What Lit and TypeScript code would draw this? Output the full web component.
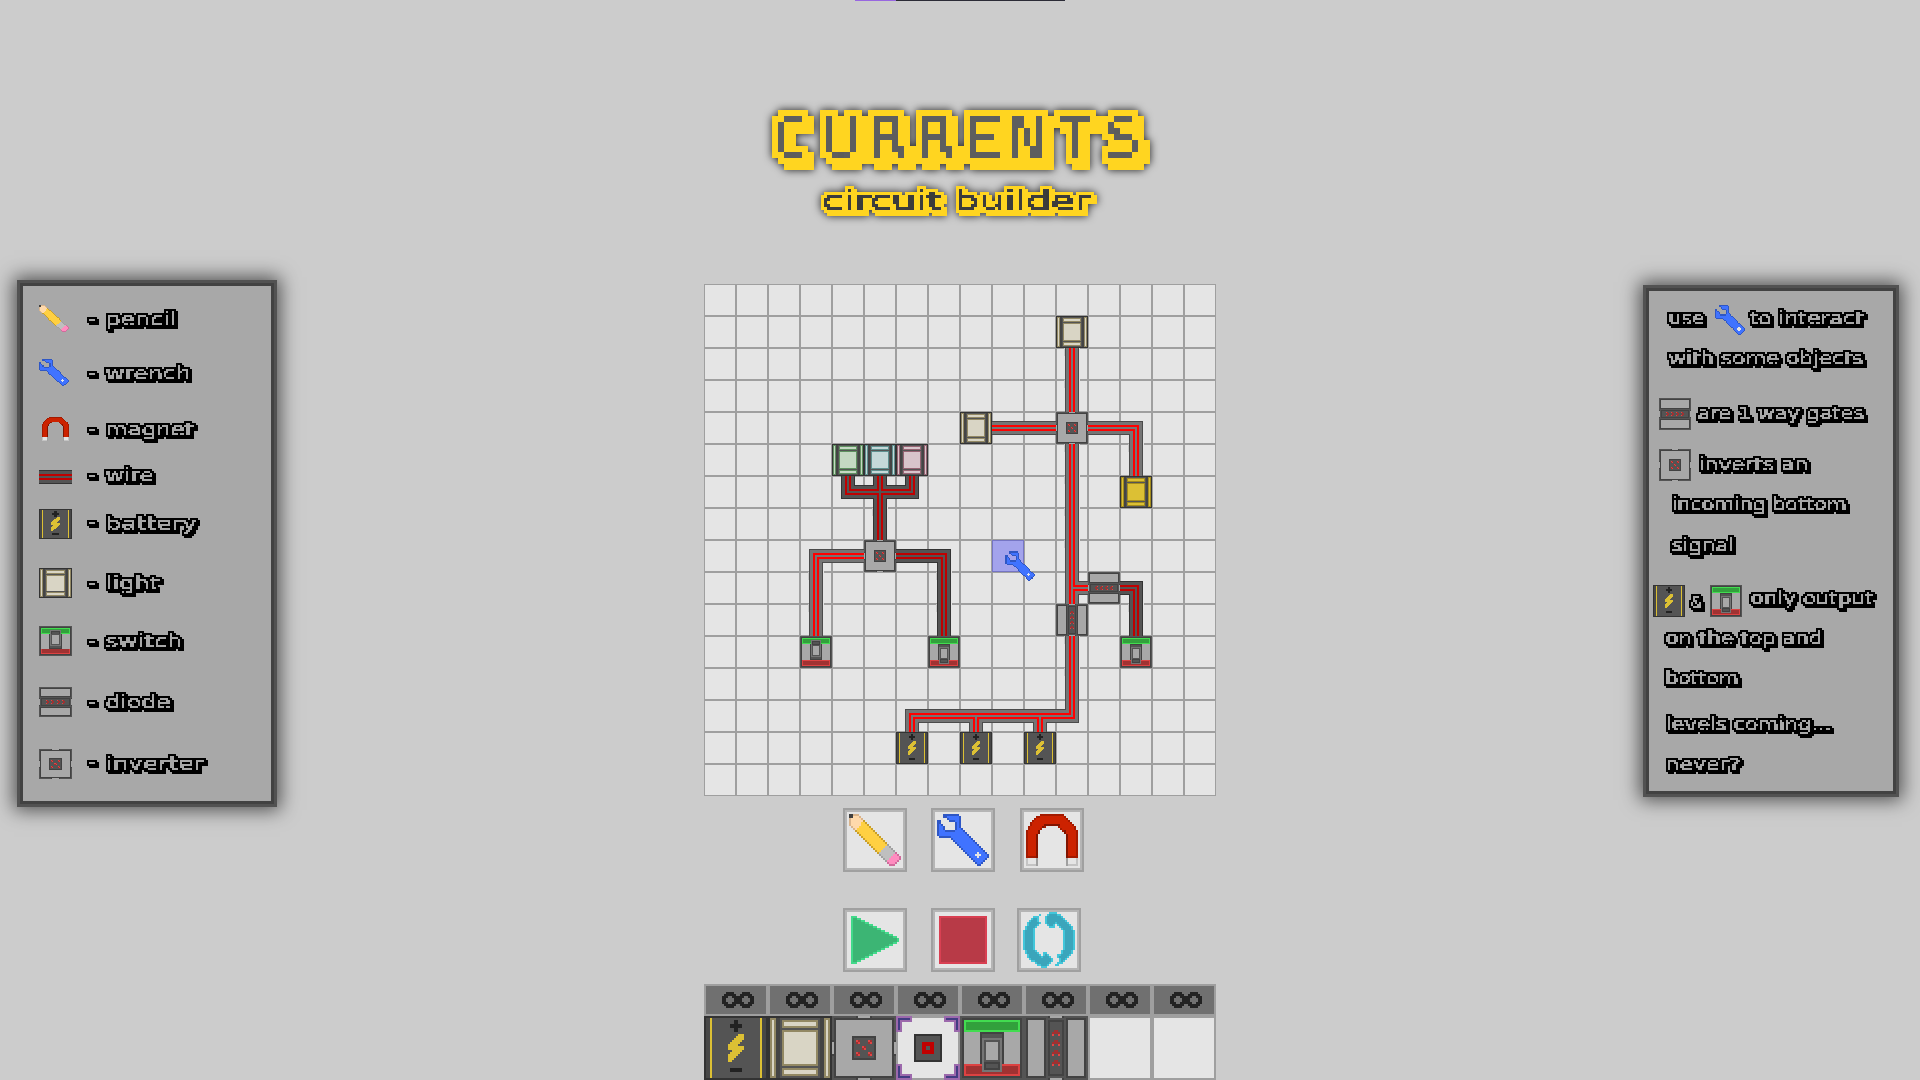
import { LitElement, html, svg, css } from "lit";
import { customElement } from "lit/decorators.js";

type Pt = [number, number];
const r = (x: number, y: number, w: number, h: number, f: string) =>
  svg`<rect x=${x} y=${y} width=${w} height=${h} fill=${f}></rect>`;

/* Pixel-art rasteriser: polygons are sampled on a 32x32 canvas. */
interface Shape { pts: Pt[]; fill: string; edge: string; }
const inside = (p: Pt[], x: number, y: number) => {
  let c = false;
  for (let i = 0, j = p.length - 1; i < p.length; j = i++) {
    const [xi, yi] = p[i], [xj, yj] = p[j];
    if (yi > y !== yj > y && x < ((xj - xi) * (y - yi)) / (yj - yi) + xi) c = !c;
  }
  return c;
};
const P = (s: string): Pt[] => s.trim().split(/\s+/).map((q) => q.split(",").map(Number) as Pt);
const raster = (shapes: Shape[]) => {
  const g: number[][] = [];
  for (let y = 0; y < 32; y++) {
    g.push([]);
    for (let x = 0; x < 32; x++) {
      let k = -1;
      shapes.forEach((s, i) => { if (inside(s.pts, x + 0.5, y + 0.5)) k = i; });
      g[y].push(k);
    }
  }
  const at = (x: number, y: number) => (g[y] && g[y][x] !== undefined ? g[y][x] : -1);
  const d: Record<string, string> = {};
  for (let y = 0; y < 32; y++)
    for (let x = 0; x < 32; x++) {
      const k = g[y][x];
      if (k < 0) continue;
      const e = at(x - 1, y) < 0 || at(x + 1, y) < 0 || at(x, y - 1) < 0 || at(x, y + 1) < 0;
      const c = e ? shapes[k].edge : shapes[k].fill;
      d[c] = (d[c] || "") + `M${x} ${y}h1v1h-1z`;
    }
  return Object.entries(d).map(([c, q]) => svg`<path fill=${c} d=${q}></path>`);
};
const bitmap = (rows: string[], c: string) =>
  svg`<path fill=${c} d=${rows.map((l, y) => [...l].map((q, x) => (q === "#" ? `M${x} ${y}h1v1h-1z` : "")).join("")).join("")}></path>`;

/* Tools */
const pencil = raster([
  { pts: P("3,3 8,3 11,6 11,8 8,11 6,11 3,8"), fill: "#ffd9ab", edge: "#d9b48c" },
  { pts: P("11,6 24,19 19,24 6,11 8,10 9,9 9,8"), fill: "#ffd042", edge: "#c9a02c" },
  { pts: P("23,18 27,22 22,27 18,23"), fill: "#bfbfbf", edge: "#a0a0a0" },
  { pts: P("26,22 27,22 29,24 29,26 26,29 24,29 22,27"), fill: "#ff8cbf", edge: "#d06c9c" },
  { pts: P("3,3 5,3 5,5 3,5"), fill: "#404040", edge: "#404040" },
]);
const wrench = svg`${raster([
  { pts: P("6,3 14,3 15,4 15,9 29,23 29,25 25,29 24,29 9.5,15 5,15 3,13 3,6 5,6 5,8 7,9 7,11 12,11 12,7 10,7 8,5 6,5"), fill: "#4073ff", edge: "#2f57c4" },
])}${r(22, 23, 3, 1, "#e5e5e5")}${r(23, 22, 1, 3, "#e5e5e5")}`;
const arch = P("3,25 3,12 4,10 5,8 7,6 9,4 11,3 21,3 23,4 25,6 27,8 28,10 29,12 29,25 23,25 23,14 22,12 20,10 18,9 14,9 12,10 10,12 9,14 9,25");
const magnet = svg`${raster([{ pts: arch, fill: "#cc2200", edge: "#a31a00" }])}
  ${r(8, 13, 1, 12, "#801400")}${r(9, 11, 1, 2, "#801400")}${r(11, 9, 1, 1, "#801400")}${r(12, 8, 8, 1, "#801400")}${r(23, 13, 1, 12, "#801400")}${r(22, 11, 1, 2, "#801400")}
  ${r(3, 25, 6, 4, "#c4c4c4")}${r(4, 25, 4, 3, "#e5e5e5")}${r(23, 25, 6, 4, "#c4c4c4")}${r(24, 25, 4, 3, "#e5e5e5")}${r(8, 25, 1, 4, "#a0a0a0")}${r(23, 25, 1, 4, "#a0a0a0")}`;
const play = raster([{ pts: P("4,4 6,4 28,15 28,17 6,28 4,28"), fill: "#3cb574", edge: "#42d98a" }]);
const stop = raster([{ pts: P("4,4 28,4 28,28 4,28"), fill: "#b83a47", edge: "#d94052" }]);
const half = P("13,3 9,4 7,6 5,8 3,12 3,20 5,24 8,27 11,29 13,30 15,30 18,27 18,25 15,22 13,22 13,24 11,23 9,20 9,12 10,9 13,8 11,7 11,5");
const reload = raster([half, half.map(([x, y]) => [32 - x, 32 - y] as Pt)].map((pts) => ({ pts, fill: "#3ba5bb", edge: "#42c6da" })));

/* Components */
const battery = svg`${r(0, 0, 32, 32, "#333333")}${r(1, 1, 30, 30, "#474747")}${r(4, 1, 24, 30, "#545454")}
  ${r(3, 1, 1, 30, "#dcc034")}${r(28, 1, 1, 30, "#dcc034")}
  ${r(13, 4, 6, 2, "#222")}${r(15, 2, 2, 6, "#222")}${r(13, 26, 6, 2, "#222")}
  ${raster([{ pts: P("18,9 20,9 20,12 17,15 20,15 20,17 14,23 12,23 12,20 15,17 12,17 12,15"), fill: "#dcc034", edge: "#dcc034" }])}`;
const light = (f: string, e: string) => {
  const b = (x: number, y: number, w: number, h: number) => svg`${r(x, y, w, h, e)}${r(x + 1, y + 1, w - 2, h - 2, f)}`;
  return svg`${r(0, 0, 32, 32, "#333333")}${r(4, 1, 24, 30, "#444")}${r(6, 1, 20, 30, "#545454")}
    ${b(1, 1, 3, 30)}${b(28, 1, 3, 30)}${b(7, 2, 18, 4)}${b(7, 7, 18, 18)}${b(7, 26, 18, 4)}`;
};
const frame = svg`${r(0, 0, 32, 32, "#545454")}${r(1, 1, 30, 30, "#424242")}${r(2, 2, 28, 28, "#a8a8a8")}`;
const dot = (x: number, y: number) => svg`${r(x, y, 2, 2, "#a03030")}${r(x, y, 1, 1, "#e04444")}${r(x + 1, y + 1, 1, 1, "#e04444")}`;
const inverter = svg`${frame}
  ${r(12, 0, 8, 1, "#424242")}${r(12, 31, 8, 1, "#424242")}${r(0, 12, 1, 8, "#424242")}${r(31, 12, 1, 8, "#424242")}
  ${r(13, 0, 6, 1, "#a8a8a8")}${r(13, 31, 6, 1, "#a8a8a8")}${r(0, 13, 1, 6, "#a8a8a8")}${r(31, 13, 1, 6, "#a8a8a8")}
  ${r(10, 10, 12, 12, "#424242")}${r(11, 11, 10, 10, "#545454")}
  ${dot(12, 12)}${dot(18, 12)}${dot(15, 15)}${dot(12, 18)}${dot(18, 18)}`;
const switcher = (up: boolean) => svg`${frame}
  ${r(2, 2, 28, 6, "#42dc50")}${r(3, 3, 26, 4, "#32a03c")}${r(2, 24, 28, 6, "#dc4242")}${r(3, 25, 26, 4, "#a03232")}
  <g transform=${up ? "matrix(1 0 0 -1 0 32)" : ""}>
    ${r(10, 8, 12, 16, "#424242")}${r(11, 9, 10, 3, "#545454")}${r(11, 11, 10, 17, "#757575")}${r(12, 12, 8, 15, "#545454")}
    ${r(13, 13, 6, 9, "#a8a8a8")}${r(12, 23, 8, 4, "#424242")}${r(13, 24, 6, 2, "#545454")}</g>`;
const diode = (deg = 0) => svg`<g transform=${`rotate(${deg} 16 16)`}>
  ${r(0, 0, 32, 32, "#545454")}${r(1, 1, 10, 30, "#424242")}${r(2, 2, 8, 28, "#a8a8a8")}${r(21, 1, 10, 30, "#424242")}${r(22, 2, 8, 28, "#a8a8a8")}
  ${r(12, 0, 8, 1, "#424242")}${r(12, 31, 8, 1, "#424242")}${r(13, 0, 6, 1, "#a8a8a8")}${r(13, 31, 6, 1, "#a8a8a8")}
  ${r(12, 2, 8, 28, "#424242")}${r(13, 3, 6, 26, "#545454")}
  ${[7, 12, 17, 22].map((y) => svg`${r(15, y, 2, 1, "#a03030")}${r(14, y + 1, 4, 1, "#a03030")}${r(14, y + 2, 1, 1, "#e04444")}${r(17, y + 2, 1, 1, "#e04444")}`)}</g>`;
const wireNode = svg`${r(0, 0, 32, 32, "#9f9f9f")}${r(1, 1, 30, 30, "#e5e5e5")}
  ${r(9, 9, 14, 14, "#333")}${r(10, 10, 12, 12, "#545454")}${r(13, 13, 6, 6, "#c00000")}${r(15, 15, 2, 2, "#545454")}
  ${[0, 90, 180, 270].map((a) => svg`<g transform=${`rotate(${a} 16 16)`}>${r(0, 0, 8, 3, "#9c69ac")}${r(0, 0, 3, 8, "#9c69ac")}${r(1, 1, 6, 1, "#423c82")}${r(1, 1, 1, 6, "#423c82")}</g>`)}`;
const wireBar = svg`${r(0, 9, 32, 14, "#333")}${r(0, 10, 32, 12, "#545454")}${r(0, 13, 32, 2, "#c00000")}${r(0, 17, 32, 2, "#c00000")}`;
const emptySlot = svg`${r(0, 0, 32, 32, "#9f9f9f")}${r(1, 1, 30, 30, "#e5e5e5")}`;

const infinity = bitmap([
  "..####....####..",
  ".######..######.",
  "###..######..###",
  "##....####....##",
  "##....####....##",
  "###..######..###",
  ".######..######.",
  "..####....####..",
], "#222222");

const icon = (art: unknown, w = 32, h = 32, box = "0 0 32 32") =>
  html`<svg class="art" width=${w} height=${h} viewBox=${box} preserveAspectRatio="none">${art}</svg>`;

/* Wires: each net is stroked in layers so that joints merge. */
const net = (d: string, on: boolean) =>
  ([[14, on ? "#4b4b4b" : "#333"], [12, on ? "#757575" : "#545454"], [6, on ? "#ff0000" : "#c00000"], [2, on ? "#757575" : "#545454"]] as [number, string][])
    .map(([w, c]) => svg`<path d=${d} fill="none" stroke=${c} stroke-width=${w}></path>`);
const liveNet = "M368 64V128M288 144H352M384 144H432V192M368 160V320M368 304H384M368 352V432H208V448M272 432V448M336 432V448M160 272H112V352";
const deadNet = "M192 272H240V352M416 304H432V352M144 192V208H208V192M176 192V256";
const place = (c: number, l: number, art: unknown) => svg`<g transform=${`translate(${c * 32} ${l * 32})`}>${art}</g>`;
const cream: [string, string] = ["#d9d5c5", "#928863"];
const ticks: Pt[] = [[11, 2], [11, 3], [11, 5], [11, 6], [11, 7], [11, 8], [11, 11], [11, 12], [13, 5], [13, 10], [3, 9], [3, 10], [7, 9], [7, 10], [5, 7]];

@customElement("circuit-board")
class CircuitBoard extends LitElement {
  static styles = css`
    :host { display: block; width: 512px; height: 512px; }
    svg { display: block; shape-rendering: crispEdges; }
  `;
  render() {
    return html`<svg width="512" height="512" viewBox="0 0 512 512">
      <defs><pattern id="cell" width="32" height="32" patternUnits="userSpaceOnUse">${emptySlot}</pattern></defs>
      <rect width="512" height="512" fill="url(#cell)"></rect>
      ${ticks.map(([c, l]) => svg`${r(c * 32 + 8, l * 32, 1, 8, "#cccccc")}${r(c * 32 + 23, l * 32 - 1, 1, 2, "#e5e5e5")}`)}
      ${net(liveNet, true)}${net(deadNet, false)}
      ${place(11, 1, light(...cream))}${place(8, 4, light(...cream))}${place(13, 6, light("#dcc034", "#a38c1e"))}
      ${place(4, 5, light("#c5d8c3", "#5f9160"))}${place(5, 5, light("#c5d8d8", "#5f9190"))}${place(6, 5, light("#d8c5cb", "#966473"))}
      ${place(11, 4, inverter)}${place(5, 8, inverter)}
      ${place(12, 9, diode(-90))}${place(11, 10, diode())}
      ${place(3, 11, switcher(true))}${place(7, 11, switcher(false))}${place(13, 11, switcher(false))}
      ${place(6, 14, battery)}${place(8, 14, battery)}${place(10, 14, battery)}
      <rect x="288" y="256" width="32" height="32" fill="#7575c4"></rect><rect x="289" y="257" width="30" height="30" fill="#a3a3ec"></rect>
      <g transform="translate(298 264) scale(1.13)">${wrench}</g>
    </svg>`;
  }
}

/* Lettering filter: snaps glyphs to n-pixel blocks, then adds a block-wide outline weighted to the lower right. */
const blocks = (id: string, n: number, outline: string) => {
  const p = Math.floor((n - 1) / 2);
  return svg`<filter id=${id} filterUnits="userSpaceOnUse" primitiveUnits="userSpaceOnUse" x="-12" y="-12" width="540" height="108" color-interpolation-filters="sRGB">
    <feFlood x=${p} y=${p} width="1" height="1" flood-color="#000" result="pt"></feFlood>
    <feOffset in="pt" dx="0" dy="0" x="0" y="0" width=${n} height=${n}></feOffset>
    <feTile result="grid"></feTile>
    <feComposite in="SourceGraphic" in2="grid" operator="in"></feComposite>
    <feComponentTransfer result="s"><feFuncA type="discrete" tableValues="0 1"></feFuncA></feComponentTransfer>
    ${p > 0 ? svg`<feMorphology in="s" operator="dilate" radius=${p} result="b"></feMorphology>` : svg`<feOffset in="s" dx="0" dy="0" result="b"></feOffset>`}
    ${n % 2 === 0 ? svg`<feOffset in="b" dx="1" dy="0" result="b1"></feOffset><feOffset in="b" dx="0" dy="1" result="b2"></feOffset><feOffset in="b" dx="1" dy="1" result="b3"></feOffset>
      <feMerge result="core"><feMergeNode in="b"></feMergeNode><feMergeNode in="b1"></feMergeNode><feMergeNode in="b2"></feMergeNode><feMergeNode in="b3"></feMergeNode></feMerge>`
      : svg`<feOffset in="b" dx="0" dy="0" result="core"></feOffset>`}
    <feMorphology in="core" operator="dilate" radius=${n} result="fat"></feMorphology>
    <feOffset in="fat" dx=${n} dy=${n} result="low"></feOffset>
    <feMerge result="both"><feMergeNode in="fat"></feMergeNode><feMergeNode in="low"></feMergeNode></feMerge>
    <feFlood flood-color=${outline}></feFlood>
    <feComposite in2="both" operator="in" result="edge"></feComposite>
    <feMerge><feMergeNode in="edge"></feMergeNode><feMergeNode in="core"></feMergeNode></feMerge>
  </filter>`;
};

/* A run of outlined lettering fitted to a given width. */
const word = (t: string, w: number, base: number, gap = 0) =>
  html`<svg class="word" style=${`margin-left:${gap}px`} width=${w} height="30"><g filter="url(#b2)"><text x="1" y=${base} textLength=${w - 5} lengthAdjust="spacingAndGlyphs">${t}</text></g></svg>`;

const full = "0 0 32 32";
const trimmed = "3 2 28.6 29";
const legend: [unknown, string, number, number, string][] = [
  [pencil, "pencil", 75, 20, trimmed], [wrench, "wrench", 89, 20, trimmed], [magnet, "magnet", 92, 20, full], [wireBar, "wire", 52, 18, full],
  [battery, "battery", 95, 19, full], [light(...cream), "light", 58, 20, full], [switcher(true), "switch", 81, 20, full],
  [diode(90), "diode", 69, 20, full], [inverter, "inverter", 102, 19, full],
];
const counts = Array.from({ length: 8 }, (_, i) => i);
const slots = [battery, light(...cream), inverter, wireNode, switcher(false), diode(), emptySlot, emptySlot];

@customElement("app-root")
export class AppRoot extends LitElement {
  static styles = css`
    :host { display: block; width: 1920px; height: 1080px; overflow: hidden; background: #cccccc; font-family: "DejaVu Sans", sans-serif; }
    * { box-sizing: border-box; }
    svg { display: block; flex: none; overflow: visible; }
    .art { shape-rendering: crispEdges; }
    .defs { position: absolute; }
    .page { position: relative; display: flex; justify-content: space-between; width: 1920px; height: 1080px; padding: 0 21px 0 17px; }
    .loader { position: absolute; left: 855px; top: 0; width: 210px; height: 1px; background: linear-gradient(90deg, #9867e0 41px, #2b2b36 41px); }
    .panel { flex: none; background: #a8a8a8; border: 3px solid #525252; box-shadow: inset 0 0 0 3px #424242, 0 0 18px 3px rgba(0, 0, 0, 0.62); display: grid; align-content: start; }
    .left { width: 260px; height: 527px; margin-top: 280px; padding: 21px 0 0 19px; grid-template-rows: 54px 56px 48px 47px 59px 58px 61px 62px 30px; }
    .right { width: 256px; height: 512px; margin-top: 285px; padding: 17px 0 0 13px; grid-template-rows: 40px 53px 51px 42px 41px 53px 40px 40px 46px 40px 32px; }
    .row { display: flex; align-items: flex-start; }
    .sources { margin-left: -6px; }
    .amp { margin-right: 4px; display: flex; }
    .inline-tool { margin-left: 7px; display: flex; }
    .word { margin-top: 1px; }
    .word text { font-size: 17.5px; fill: #a8a8a8; stroke: #a8a8a8; stroke-width: 0.4px; }
    .center { width: 512px; display: flex; flex-direction: column; }
    .heading { height: 284px; padding-top: 104px; flex: none; }
    .title { margin-left: 2px; filter: drop-shadow(0 0 4px rgba(0, 0, 0, 0.85)); }
    .title text { font: 58px "DejaVu Sans Mono", monospace; fill: #5e5e5e; stroke: #5e5e5e; stroke-width: 0.4px; }
    .subtitle { margin-top: 2px; filter: drop-shadow(0 0 4px rgba(0, 0, 0, 0.8)); }
    .subtitle text { font-size: 27px; fill: #3c3c3c; stroke: #3c3c3c; stroke-width: 0.3px; }
    .tools { display: flex; padding-left: 139px; }
    .first { margin-top: 12px; gap: 24px; }
    .second { margin-top: 36px; gap: 24px; }
    .tool { width: 64px; height: 64px; background: #e5e5e5; border: 2px solid #a0a0a0; box-shadow: inset 0 0 0 2px #b5b5b5; flex: none; }
    .tool svg { margin: -2px; }
    .first .tool:last-child { margin-left: 1px; }
    .second .tool:last-child { margin-left: -2px; }
    .bar { display: grid; grid-template-columns: repeat(8, 64px); }
    .counts { margin-top: 12px; }
    .count { height: 32px; background: #707070; border: 2px solid #9f9f9f; display: flex; justify-content: center; padding: 6px 0 0 4px; }
  `;
  render() {
    return html`<main class="page">
      <svg class="defs" width="0" height="0"><defs>${blocks("b6", 6, "#ffd520")}${blocks("b3", 3, "#ffd520")}${blocks("b2", 2, "#000")}</defs></svg>
      <div class="loader"></div>
      <aside class="panel left">
        ${legend.map(([a, t, w, b, box]) => html`<div class="row">${icon(a, 33, 30, box)}${word("-", 12, b - 2, 15)}${word(t, w + 1, b, 5)}</div>`)}
      </aside>
      <section class="center">
        <header class="heading">
          <svg class="title" width="510" height="74"><g filter="url(#b6)"><text x="67 118 164 212 260 303 352 399" y="54">CURRENTS</text></g></svg>
          <svg class="subtitle" width="512" height="40"><g filter="url(#b3)"><text x="118" y="30" textLength="269" lengthAdjust="spacingAndGlyphs">circuit builder</text></g></svg>
        </header>
        <circuit-board></circuit-board>
        <div class="tools first">${[pencil, wrench, magnet].map((a) => html`<div class="tool">${icon(a, 64, 64)}</div>`)}</div>
        <div class="tools second">${[play, stop, reload].map((a) => html`<div class="tool">${icon(a, 64, 64)}</div>`)}</div>
        <div class="bar counts">${counts.map(() => html`<div class="count">${icon(infinity, 32, 16, "0 0 16 8")}</div>`)}</div>
        <div class="bar">${slots.map((a) => icon(a, 64, 64))}</div>
      </section>
      <aside class="panel right">
        <div class="row">${word("use", 41, 18, 8)}<span class="inline-tool">${icon(wrench, 34, 34, "3 3 29 29")}</span>${word("to interact", 119, 18, -1)}</div>
        <div class="row">${word("with some objects", 200, 18, 8)}</div>
        <div class="row">${icon(diode(90))}${word("are 1 way gates", 172, 20, 5)}</div>
        <div class="row">${icon(inverter)}${word("inverts an", 115, 20, 6)}</div>
        <div class="row">${word("incoming bottom", 180, 18, 11)}</div>
        <div class="row">${word("signal", 68, 18, 11)}</div>
        <div class="row sources">${icon(battery)}<span class="amp">${word("&", 17, 22, 4)}</span>${icon(switcher(false))}${word("only output", 128, 18, 7)}</div>
        <div class="row">${word("on the top and", 162, 18, 5)}</div>
        <div class="row">${word("bottom", 78, 18, 5)}</div>
        <div class="row">${word("levels coming...", 171, 18, 5)}</div>
        <div class="row">${word("never?", 80, 18, 5)}</div>
      </aside>
    </main>`;
  }
}
